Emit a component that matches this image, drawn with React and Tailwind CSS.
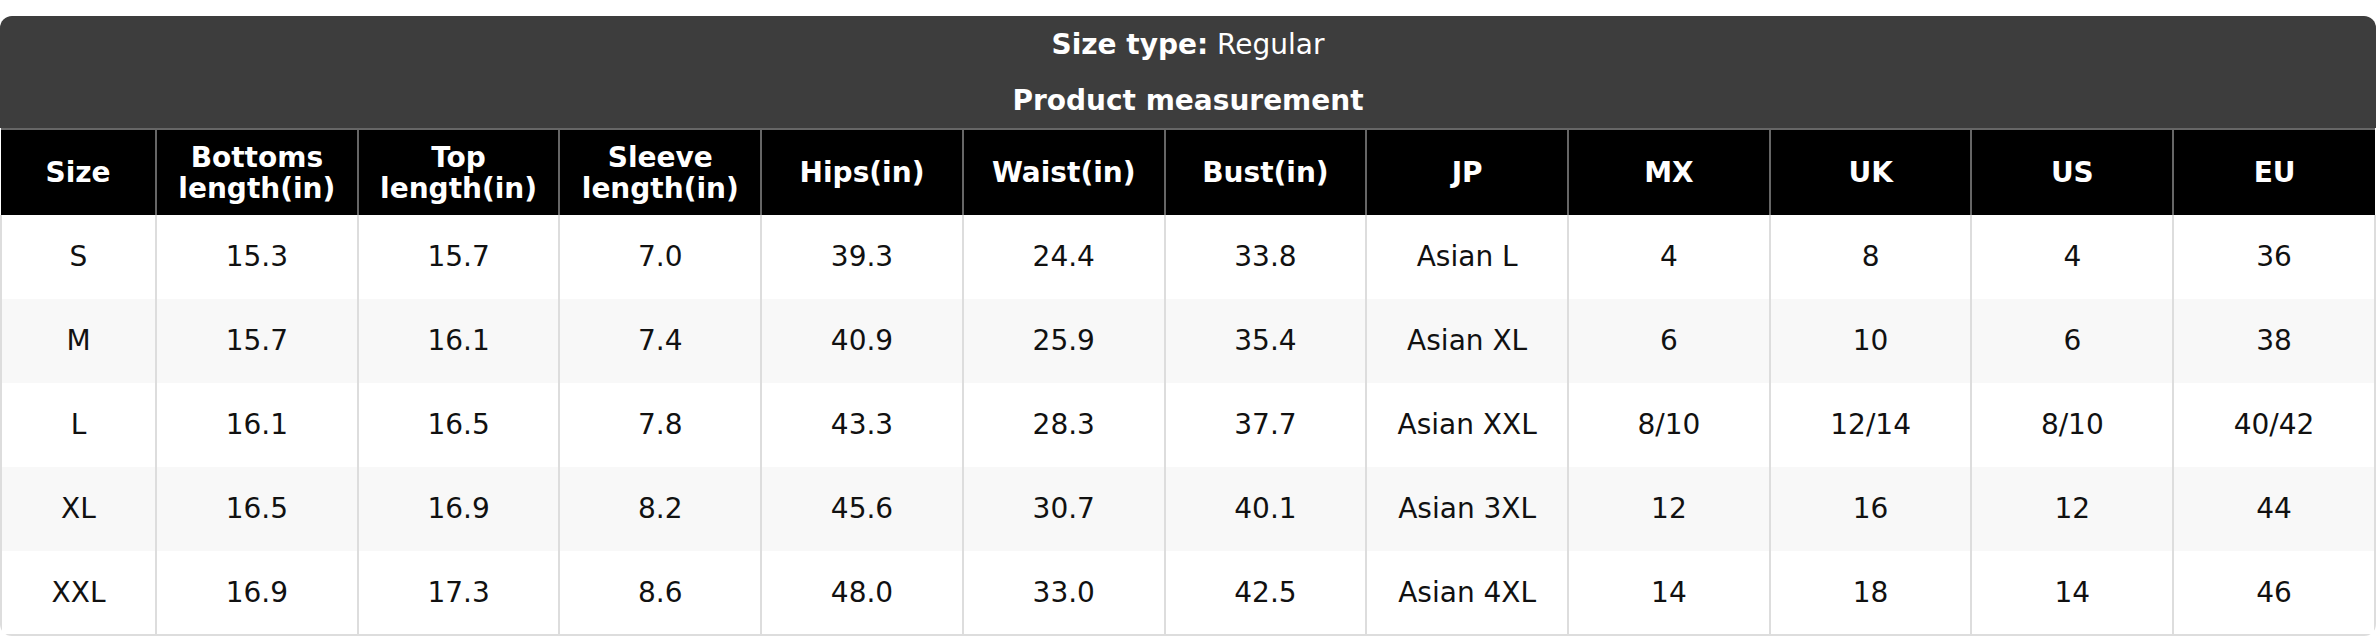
import React from "react";

const columns = [
  "Size",
  "Bottoms length(in)",
  "Top length(in)",
  "Sleeve length(in)",
  "Hips(in)",
  "Waist(in)",
  "Bust(in)",
  "JP",
  "MX",
  "UK",
  "US",
  "EU",
];

const rows = [
  ["S", "15.3", "15.7", "7.0", "39.3", "24.4", "33.8", "Asian L", "4", "8", "4", "36"],
  ["M", "15.7", "16.1", "7.4", "40.9", "25.9", "35.4", "Asian XL", "6", "10", "6", "38"],
  ["L", "16.1", "16.5", "7.8", "43.3", "28.3", "37.7", "Asian XXL", "8/10", "12/14", "8/10", "40/42"],
  ["XL", "16.5", "16.9", "8.2", "45.6", "30.7", "40.1", "Asian 3XL", "12", "16", "12", "44"],
  ["XXL", "16.9", "17.3", "8.6", "48.0", "33.0", "42.5", "Asian 4XL", "14", "18", "14", "46"],
];

const SizeChart = () => {
  return (
    <div className="bg-white pt-4 font-['DejaVu_Sans',sans-serif] text-[28px]">
      <div className="overflow-hidden rounded-xl">
        <div className="bg-[#3d3d3d] text-white">
          <div className="flex h-[57px] items-center justify-center">
            <span className="font-bold">Size type:</span>
            <span>&nbsp;Regular</span>
          </div>
          <div className="flex h-[55px] items-center justify-center font-bold">
            Product measurement
          </div>
        </div>

        <table className="w-full table-fixed border-collapse">
          <colgroup>
            <col className="w-[155px]" />
            {columns.slice(1).map((c) => (
              <col key={c} />
            ))}
          </colgroup>
          <thead>
            <tr className="h-[86px] bg-black text-white">
              {columns.map((col, i) => (
                <th
                  key={col}
                  className={`border-t-2 border-[#666] px-2 text-center font-bold leading-[31px] ${
                    i > 0 ? "border-l-2" : ""
                  }`}
                >
                  {col.includes(" ") ? (
                    <>
                      {col.split(" ")[0]}
                      <br />
                      {col.split(" ")[1]}
                    </>
                  ) : (
                    col
                  )}
                </th>
              ))}
            </tr>
          </thead>
          <tbody>
            {rows.map((row, r) => (
              <tr
                key={row[0]}
                className={`h-[84px] ${r % 2 === 1 ? "bg-[#f8f8f8]" : "bg-white"}`}
              >
                {row.map((cell, i) => (
                  <td
                    key={i}
                    className={`border-l-2 border-[#ddd] text-center text-[#111] ${
                      i === row.length - 1 ? "border-r-2" : ""
                    } ${r === rows.length - 1 ? "border-b-2" : ""}`}
                  >
                    {cell}
                  </td>
                ))}
              </tr>
            ))}
          </tbody>
        </table>
      </div>
    </div>
  );
};

export default function App() {
  return <SizeChart />;
}
